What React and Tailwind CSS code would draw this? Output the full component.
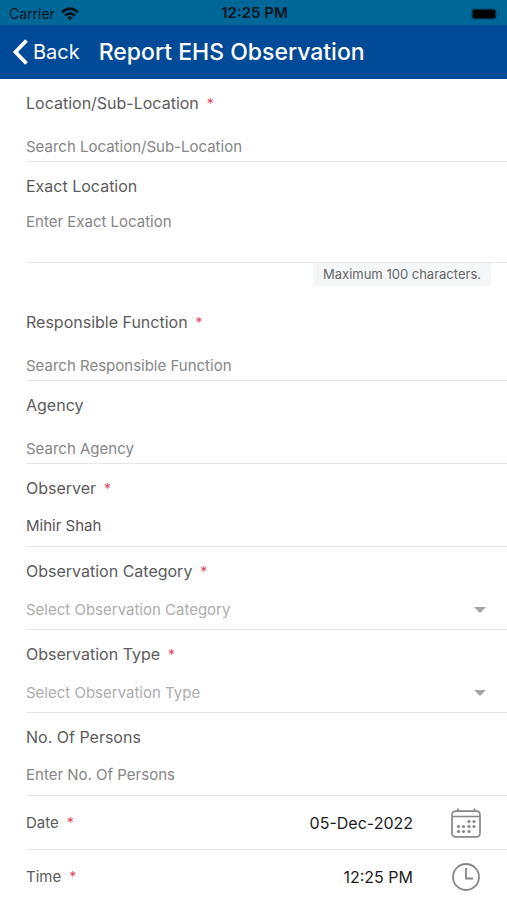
import React, { useId } from "react";

function Required() {
  return <span className="ml-1 text-sm text-[#e0445c]"> *</span>;
}

function Label({ htmlFor, required, children }) {
  return (
    <label htmlFor={htmlFor} className="block text-base leading-6 text-[#5c5c5c]">
      {children}
      {required && <Required />}
    </label>
  );
}

function Field({ label, required, children }) {
  const id = useId();
  return (
    <div className="ml-[26px] border-b border-[#e6e6e8] pt-3">
      <Label htmlFor={id} required={required}>{label}</Label>
      {children(id)}
    </div>
  );
}

function SearchField({ label, required, placeholder }) {
  return (
    <Field label={label} required={required}>
      {(id) => (
        <input
          id={id}
          type="text"
          placeholder={placeholder}
          className="mt-4 block h-[30px] w-full text-[15px] outline-none placeholder:text-[#868686]"
        />
      )}
    </Field>
  );
}

function TextField({ label, required, placeholder, defaultValue }) {
  return (
    <Field label={label} required={required}>
      {(id) => (
        <input
          id={id}
          type="text"
          placeholder={placeholder}
          defaultValue={defaultValue}
          className="mt-2.5 mb-1.5 block h-[30px] w-full text-[15px] text-[#555555] outline-none placeholder:text-[#868686]"
        />
      )}
    </Field>
  );
}

function SelectField({ label, required, placeholder }) {
  return (
    <Field label={label} required={required}>
      {(id) => (
        <div className="mt-3 mb-1 flex items-center pr-[21px]">
          <select
            id={id}
            defaultValue=""
            className="h-[30px] min-w-0 flex-1 appearance-none text-[15px] text-[#adadad] outline-none"
          >
            <option value="">{placeholder}</option>
          </select>
          <svg className="pointer-events-none h-[6px] w-3" viewBox="0 0 12 6" aria-hidden="true">
            <path d="M0 0h12L6 6z" fill="#a3a3a3" />
          </svg>
        </div>
      )}
    </Field>
  );
}

function PickerRow({ label, value, icon }) {
  const id = useId();
  return (
    <div className="ml-[26px] flex h-[54px] items-center border-b border-[#e6e6e8] pr-[26px]">
      <label htmlFor={id} className="text-[15px] leading-6 text-[#5c5c5c]">
        {label}
        <Required />
      </label>
      <input
        id={id}
        type="text"
        defaultValue={value}
        className="min-w-0 flex-1 text-right text-base text-[#1c1c1c] outline-none"
      />
      <button type="button" aria-label={`Choose ${label.toLowerCase()}`} className="ml-[38px]">
        {icon}
      </button>
    </div>
  );
}

function CalendarIcon() {
  const dots = [
    [18, 13.5], [23, 13.5],
    [7.500, 18.500], [12.500, 18.500], [18, 18.500], [23, 18.500],
    [7.500, 23.500], [12.500, 23.500], [18, 23.500],
  ];
  return (
    <svg className="h-[30px] w-[30px]" viewBox="0 0 30 30" fill="none" stroke="#86868c" strokeWidth="1.7">
      <rect x="1" y="3.2" width="28" height="25.6" rx="3.5" />
      <path d="M1 8.500h28M7 .5v3.500M23.500 .5v3.500" />
      {dots.map(([x, y]) => (
        <circle key={`${x}-${y}`} cx={x} cy={y} r="1.6" fill="#86868c" stroke="none" />
      ))}
    </svg>
  );
}

function ClockIcon() {
  return (
    <svg className="h-[30px] w-[30px]" viewBox="0 0 30 30" fill="none" stroke="#86868c" strokeWidth="1.8">
      <circle cx="15" cy="15" r="13" />
      <path d="M15 6v10.500h7" />
    </svg>
  );
}

function WifiIcon() {
  return (
    <svg className="h-[14px] w-[18px]" viewBox="0 0 18 14" fill="none" stroke="#05141c" strokeWidth="2.6">
      <path d="M1 5.2Q9-2 17 5.2" />
      <path d="M4 8.6Q9 4 14 8.6" />
      <path d="M9 13.5 6.2 10.6Q9 8.4 11.8 10.6Z" fill="#05141c" stroke="none" />
    </svg>
  );
}

function BatteryIcon() {
  return (
    <svg className="h-3 w-[29px]" viewBox="0 0 29 12">
      <rect x="0.5" y="0.5" width="25" height="11" rx="3" fill="none" stroke="#04557d" />
      <rect x="1.5" y="1.5" width="23" height="9" rx="1.8" fill="#000000" />
      <path d="M27 4q2 2 0 4z" fill="#04415f" />
    </svg>
  );
}

export default function App() {
  return (
    <div className="flex h-screen flex-col overflow-hidden bg-white font-['Inter','Liberation_Sans',sans-serif]">
      <div className="grid h-[25px] shrink-0 grid-cols-3 items-center bg-[#006799] pt-0.5 pr-[7px] pl-[9px] text-[#05141c]">
        <div className="flex items-center gap-1.5">
          <span className="text-sm">Carrier</span>
          <WifiIcon />
        </div>
        <span className="text-center text-[15px] font-semibold">12:25 PM</span>
        <div className="flex justify-end">
          <BatteryIcon />
        </div>
      </div>

      <header className="flex h-[54px] shrink-0 items-center bg-[#004a97] pl-3 text-white">
        <button type="button" className="flex items-center gap-[5px] text-xl">
          <svg className="h-[26px] w-4" viewBox="0 0 16 26" fill="none" stroke="#ffffff" strokeWidth="3.8" strokeLinejoin="miter">
            <path d="M14.500 1.500 3.500 13l11 11.500" />
          </svg>
          Back
        </button>
        <h1 className="ml-[19px] text-[23px] font-medium">Report EHS Observation</h1>
      </header>

      <main className="min-h-0 flex-1 overflow-y-auto [scrollbar-width:none]">
        <form>
          <SearchField label="Location/Sub-Location" required placeholder="Search Location/Sub-Location" />
          <Field label="Exact Location">
            {(id) => (
              <textarea
                id={id}
                maxLength={100}
                placeholder="Enter Exact Location"
                className="mt-3 block h-[52px] w-full resize-none text-[15px] leading-6 outline-none placeholder:text-[#868686]"
              />
            )}
          </Field>
          <div className="flex h-[35px] items-start justify-end pr-4">
            <span className="bg-[#f4f6f8] px-2.5 text-[13px] leading-[23px] text-[#666666]">
              Maximum 100 characters.
            </span>
          </div>
          <SearchField label="Responsible Function" required placeholder="Search Responsible Function" />
          <SearchField label="Agency" placeholder="Search Agency" />
          <TextField label="Observer" required defaultValue="Mihir Shah" />
          <SelectField label="Observation Category" required placeholder="Select Observation Category" />
          <SelectField label="Observation Type" required placeholder="Select Observation Type" />
          <TextField label="No. Of Persons" placeholder="Enter No. Of Persons" />
          <PickerRow label="Date" value="05-Dec-2022" icon={<CalendarIcon />} />
          <PickerRow label="Time" value="12:25 PM" icon={<ClockIcon />} />
        </form>
      </main>
    </div>
  );
}
